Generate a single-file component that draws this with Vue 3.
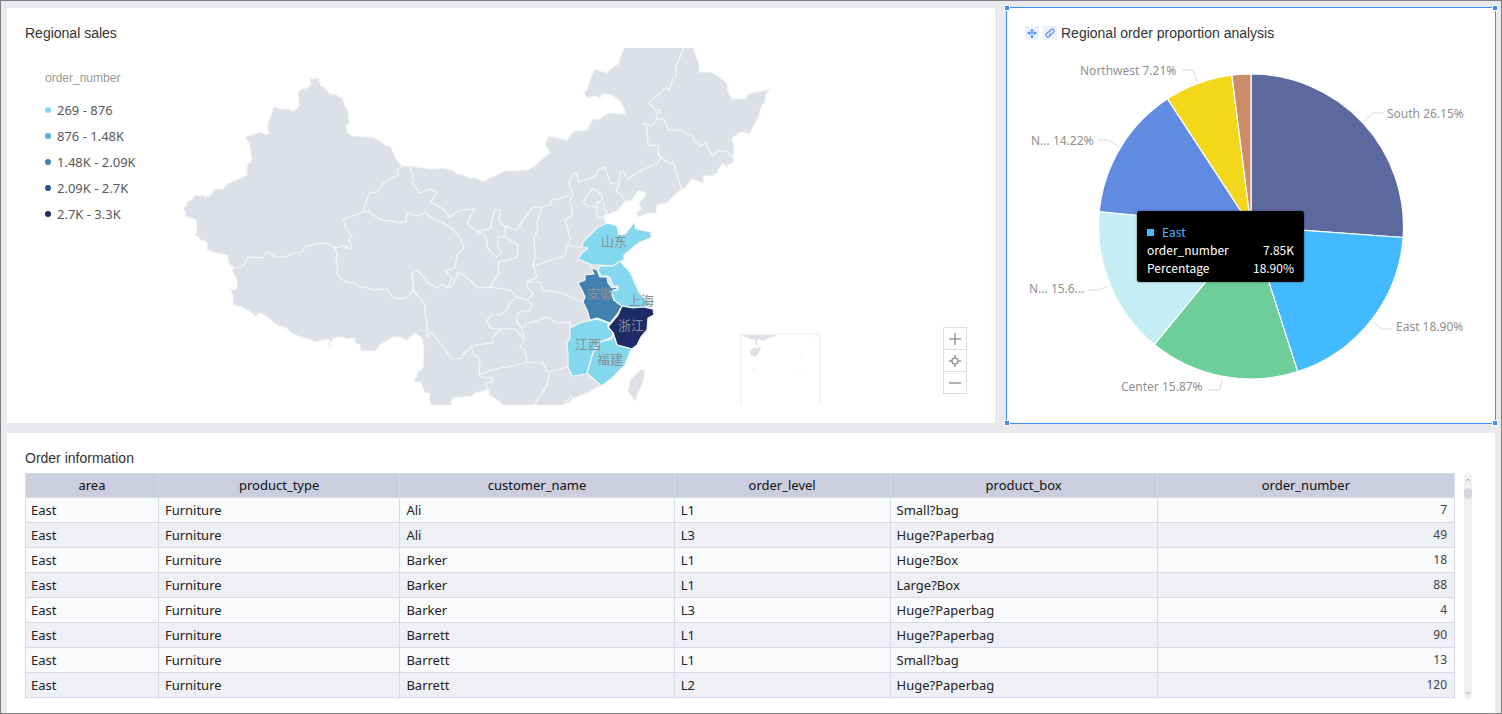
<script setup>
import { computed, ref } from 'vue'

// --- Map data ---
const legend = [
  { label: '269 - 876', color: '#84d8ee' },
  { label: '876 - 1.48K', color: '#5ba9d4' },
  { label: '1.48K - 2.09K', color: '#4180b1' },
  { label: '2.09K - 2.7K', color: '#2a5694' },
  { label: '2.7K - 3.3K', color: '#1d2b66' },
]

const mainland =
  'M183 209L186 206 187 202 192 199 196 195 200 196 203 194 204 197 210 196 215 189 223 189 227 184 247 175 247 166 250 162 252 160 249 143 245 137 261 132 264 134 269 134 267 127 274 106 280 109 289 109 292 111 297 109 299 106 298 93 301 89 307 88 311 84 310 79 319 78 319 82 321 83 320 85 325 88 330 94 337 95 343 99 345 107 349 112 348 117 350 122 346 126 348 133 353 136 373 137 380 141 385 145 391 147 395 158 402 166 410 166 430 169 443 168 452 170 456 173 463 175 469 178 477 178 483 182 492 177 505 171 527 170 535 166 542 159 550 153 545 144 549 136 567 140 574 131 587 130 593 119 600 119 603 116 610 113 625 114 624 108 620 101 612 95 603 94 600 98 595 96 587 98 584 93 587 90 589 82 595 69 606 73 619 63 620 58 624 48 624 46 692 46 693 48 696 55 699 64 699 72 710 72 718 76 727 83 728 92 732 99 746 99 748 94 758 92 770 89 766 95 765 101 761 108 758 118 754 125 750 134 741 132 732 138 734 148 733 163 727 165 727 168 723 163 719 168 717 173 712 176 703 176 704 183 692 179 685 188 680 190 667 203 657 205 656 213 648 213 639 217 636 213 641 209 639 203 646 195 643 191 638 191 632 200 625 202 617 211 609 214 605 215 605 222 607 223 617 226 619 235 625 234 630 228 634 222 636 229 651 232 651 238 640 242 630 250 624 255 624 260 620 261 630 272 635 283 639 292 646 300 652 305 647 307 653 309 654 315 648 318 647 330 637 345 632 349 630 352 625 365 613 377 602 386 595 388 590 392 577 397 573 398 570 402 567 403 560 407 505 407 500 402 489 395 488 389 480 392 475 393 472 396 463 397 452 398 451 407 433 407 429 400 430 393 425 393 420 382 414 382 418 372 423 368 423 360 424 350 422 338 415 333 410 337 407 341 400 337 393 337 380 345 376 351 361 351 360 345 355 343 355 338 347 339 342 337 333 338 331 342 330 347 329 339 322 340 315 342 309 339 303 338 293 334 285 327 279 326 273 322 265 315 259 313 256 317 252 313 242 307 233 305 233 295 230 289 235 290 237 288 237 280 232 270 234 268 229 264 227 255 217 253 207 250 207 242 200 240 198 236 193 236 197 233 196 220 188 217 185 217 186 212Z'

const taiwan = 'M641 369L645 371 643 383 637 395 635 402 633 398 628 392 630 380Z'

// Shared borders between the provinces that carry no value
const borders = [
  'M234 268L242 267 248 257 262 258 268 252 275 257 285 257 293 253 302 252 305 247 315 244 327 243 335 248 344 246 350 249 351 244 348 240 352 236 345 227 345 223 342 220 363 212 369 193 377 192 383 183 391 179 398 175 397 170 402 166',
  'M363 212L368 211 373 215 382 220 391 221 400 223 406 221 407 212 416 216 425 213 435 220 442 222 450 227 460 237 464 248 457 255 455 268 445 271 452 278 447 288',
  'M335 248L337 253 336 260 338 267 337 273 341 279 347 282 353 283 359 286 367 288 373 290 387 289 392 297 400 299 408 297 413 290',
  'M413 290L413 280 412 273 417 271 425 278 428 283 437 288 443 284 447 288 453 285 458 272 463 275 468 278 478 288 490 287 510 290 517 297 510 302 507 310 500 315 492 315 487 320 490 328 500 329 515 329 523 338',
  'M413 290L420 298 425 305 425 313 427 323 427 338 431 332 434 336 440 343 452 359 462 358 464 353 472 347 477 345 493 343 493 337 500 329',
  'M472 347L473 354 478 357 480 365 479 375 483 378 492 377 493 382 485 383 488 389',
  'M479 375L492 370 500 368 508 367 517 365 527 362 543 363 547 372 558 370 568 367',
  'M549 373L548 382 543 392 537 400 533 407',
  'M517 297L527 300 532 304 530 310 517 313 517 322 522 328 524 340 520 347 525 350 527 362',
  'M524 328L525 324 532 322 547 317 557 323 570 322 570 328',
  'M410 167L414 180 412 183 420 193 430 189 437 192 431 202 443 209 450 217 458 211 475 209 468 220 468 225 478 232 491 228 492 220 495 210 500 210 499 222 505 226 512 229 518 229 522 222 532 208 542 207 550 205 552 200 558 199 570 195',
  'M478 232L484 234 487 240 487 247 492 253 497 257 501 252 498 246 498 237 505 237 518 245 517 257 508 260 498 262 499 273 490 287',
  'M505 226L505 237',
  'M542 207L537 223 538 230 534 237 535 257 533 266 537 277 527 282 527 287 533 294 527 300',
  'M527 282L540 282 543 290 563 293 577 300 584 302',
  'M533 266L545 262 557 258 565 255 567 245 570 240 568 230 565 220 573 215 570 200 573 196 569 182 574 173 577 174 579 182 587 179 597 175 597 171 605 167 610 183 619 184 620 172 623 172 628 179 642 170 658 163 661 157 658 155 659 145 648 146 647 127 643 123 652 126 657 119 656 113 660 113 660 110 656 110 649 103 667 87 669 92 673 78 676 77 676 67 683 50 683 46',
  'M567 245L582 248',
  'M657 119L664 119 668 130 680 130 685 133 693 135 694 141 699 143 699 147 706 143 712 156 718 151 726 151 733 157',
  'M661 157L670 164 673 162 678 177 681 189',
  'M619 184L616 191 622 195 625 202',
  'M583 203L588 195 593 188 602 195 602 200 597 202 597 207 587 206Z',
  'M597 202L604 203 604 209 607 212 603 218 596 215 598 207',
  'M575 398L571 396 568 400 564 402',
]

const provinces = [
  {
    name: '山东', x: 614, y: 246, color: '#84d8ee',
    path: 'M607 223L617 226 619 235 625 234 630 228 634 222 636 229 651 232 651 238 640 242 630 250 624 255 624 260 613 266 600 265 592 265 585 262 578 259 582 253 588 248 582 247 583 242 592 233 597 228Z',
  },
  {
    name: '安徽', x: 600, y: 298, color: '#4180b1',
    path: 'M591 267L597 270 600 277 607 277 608 283 612 288 617 287 617 289 611 291 614 300 622 306 618 313 610 323 597 318 590 320 587 310 583 302 585 297 582 290 578 283 585 280 585 275 594 274Z',
  },
  {
    name: '上海', x: 641, y: 305, color: '#84d8ee',
    path: 'M620 261L630 272 635 283 639 292 646 300 652 305 643 308 633 308 622 306 614 300 611 291 618 290 618 286 613 286 610 278 607 276 601 276 598 270 600 266 613 266Z',
  },
  {
    name: '浙江', x: 631, y: 330, color: '#1d2b66',
    path: 'M622 306L633 308 643 307 653 309 654 315 648 318 647 330 641 337 637 345 632 349 617 345 613 333 608 327 618 315Z',
  },
  {
    name: '江西', x: 588, y: 349, color: '#84d8ee',
    path: 'M570 328L580 323 597 319 608 323 608 327 613 333 612 337 600 342 593 353 587 374 572 376 568 367 568 355 567 343 570 338Z',
  },
  {
    name: '福建', x: 610, y: 364, color: '#84d8ee',
    path: 'M613 333L617 345 632 349 630 352 625 365 613 377 602 386 597 382 587 373 593 353 600 342 612 339Z',
  },
]

// --- Pie data ---
const pie = { cx: 1251, cy: 226.5, r: 152.5 }
const regions = [
  { value: 26.15, color: '#5c699f', label: 'South 26.15%', x: 1387, y: 118, line: '1364,121 1373,113 1384,113' },
  { value: 18.9, color: '#43baff', label: 'East 18.90%', x: 1396, y: 331, line: '1373,322 1382,329 1392,329' },
  { value: 15.87, color: '#6dce99', label: 'Center 15.87%', x: 1121, y: 391, line: '1222,379 1220,390 1208,390' },
  { value: 15.65, color: '#c4eef4', label: 'N... 15.6...', x: 1029, y: 293, line: '1108,286 1098,290 1087,290' },
  { value: 14.22, color: '#608be1', label: 'N... 14.22%', x: 1031, y: 145, line: '1119,147 1109,140 1098,140' },
  { value: 7.21, color: '#f3d71a', label: 'Northwest 7.21%', x: 1080, y: 75, line: '1197,82 1193,70 1182,70' },
  { value: 2, color: '#cd8c69' },
]

const slices = computed(() => {
  let start = 0
  return regions.map((region) => {
    const end = start + region.value / 100
    const from = pointAt(start)
    const to = pointAt(end)
    start = end
    return {
      ...region,
      path: `M${pie.cx} ${pie.cy}L${from}A${pie.r} ${pie.r} 0 0 1 ${to}Z`,
    }
  })
})

function pointAt(share) {
  const angle = share * 2 * Math.PI
  const x = pie.cx + pie.r * Math.sin(angle)
  const y = pie.cy - pie.r * Math.cos(angle)
  return `${x.toFixed(2)} ${y.toFixed(2)}`
}

// --- Table data ---
const columns = ['area', 'product_type', 'customer_name', 'order_level', 'product_box', 'order_number']
const rows = ref([
  ['East', 'Furniture', 'Ali', 'L1', 'Small?bag', 7],
  ['East', 'Furniture', 'Ali', 'L3', 'Huge?Paperbag', 49],
  ['East', 'Furniture', 'Barker', 'L1', 'Huge?Box', 18],
  ['East', 'Furniture', 'Barker', 'L1', 'Large?Box', 88],
  ['East', 'Furniture', 'Barker', 'L3', 'Huge?Paperbag', 4],
  ['East', 'Furniture', 'Barrett', 'L1', 'Huge?Paperbag', 90],
  ['East', 'Furniture', 'Barrett', 'L1', 'Small?bag', 13],
  ['East', 'Furniture', 'Barrett', 'L2', 'Huge?Paperbag', 120],
])
</script>

<template>
  <main class="dashboard">
    <section class="panel">
      <h2 class="panel-title">Regional sales</h2>
      <div class="map-body">
        <div class="legend">
          <h3>order_number</h3>
          <ul>
            <li v-for="item in legend" :key="item.label">
              <span class="dot" :style="{ background: item.color }"></span>
              {{ item.label }}
            </li>
          </ul>
        </div>
        <svg class="map" viewBox="175 48 760 357" role="img" aria-label="Regional sales map">
          <path class="land" :d="mainland" />
          <path class="land" :d="taiwan" />
          <path v-for="(d, i) in borders" :key="i" class="border" :d="d" />
          <path v-for="p in provinces" :key="p.name" class="province" :d="p.path" :fill="p.color" />
          <text v-for="p in provinces" :key="p.name" class="map-label" :x="p.x" :y="p.y">{{ p.name }}</text>
          <path class="inset-frame" d="M741 410V334H820V410" />
          <path class="inset-land" d="M742 335H777L773 337 768 338 763 341 758 339 757 342 755 340 747 338Z" />
          <path class="inset-land" d="M750 352L753 348 757 348 761 347 759 353 755 357 751 355Z" />
          <path class="inset-coast" d="M757 339L756 343 758 345" />
          <path class="inset-dash" d="M813 338L809 343M804 353L801 358M800 369V374M798 390L797 395M753 368L755 373M757 389V394M807 335L808 338" />
        </svg>
        <div class="zoom">
          <button type="button" aria-label="Zoom in">
            <svg viewBox="0 0 12 12"><path d="M0 6H12M6 0V12" /></svg>
          </button>
          <button type="button" aria-label="Reset view">
            <svg viewBox="0 0 12 12">
              <circle cx="6" cy="6" r="3" />
              <path d="M0 6H3M9 6H12M6 0V3M6 9V12" />
            </svg>
          </button>
          <button type="button" aria-label="Zoom out">
            <svg viewBox="0 0 12 12"><path d="M0 6H12" /></svg>
          </button>
        </div>
      </div>
    </section>

    <section class="panel selected">
      <span class="handle top left"></span>
      <span class="handle top right"></span>
      <span class="handle bottom left"></span>
      <span class="handle bottom right"></span>
      <div class="title-row">
        <button type="button" class="tag" aria-label="Drill down">
          <svg viewBox="0 0 14 14">
            <path class="line" d="M4 7H10M7 4V8" />
            <path class="solid" d="M2 7L5 5V9ZM12 7L9 5V9ZM5 5L7 3 9 5ZM6 9H8V12H6Z" />
          </svg>
        </button>
        <button type="button" class="tag" aria-label="Linked charts">
          <svg viewBox="0 0 14 14">
            <path class="link" d="M6.2 5.2L7.8 3.6A1.9 1.9 0 0 1 10.5 6.3L8.9 7.9A1.9 1.9 0 0 1 6.4 8M7.8 8.8L6.2 10.4A1.9 1.9 0 0 1 3.5 7.7L5.1 6.1A1.9 1.9 0 0 1 7.6 6" />
          </svg>
        </button>
        <h2 class="panel-title">Regional order proportion analysis</h2>
      </div>
      <div class="pie-body">
        <svg class="pie" viewBox="1025 48 452 357" role="img" aria-label="Order share by region">
          <path v-for="slice in slices" :key="slice.color" class="slice" :d="slice.path" :fill="slice.color" />
          <template v-for="slice in slices" :key="slice.color">
            <g v-if="slice.label">
              <polyline class="leader" :points="slice.line" />
              <text class="pie-label" :x="slice.x" :y="slice.y">{{ slice.label }}</text>
            </g>
          </template>
        </svg>
        <div class="tooltip">
          <div class="tooltip-name"><span class="swatch"></span>East</div>
          <div class="tooltip-row"><span>order_number</span><span>7.85K</span></div>
          <div class="tooltip-row"><span>Percentage</span><span>18.90%</span></div>
        </div>
      </div>
    </section>

    <section class="panel orders">
      <h2 class="panel-title">Order information</h2>
      <div class="table-body">
        <div class="table-scroll">
          <table>
            <colgroup>
              <col v-for="name in columns" :key="name" :class="`col-${name}`" />
            </colgroup>
            <thead>
              <tr>
                <th v-for="name in columns" :key="name" scope="col">{{ name }}</th>
              </tr>
            </thead>
            <tbody>
              <tr v-for="(row, i) in rows" :key="i">
                <td v-for="(cell, j) in row" :key="j" :class="{ number: j === 5 }">{{ cell }}</td>
              </tr>
              <tr class="next-row">
                <td v-for="name in columns" :key="name"></td>
              </tr>
            </tbody>
          </table>
        </div>
        <div class="scrollbar">
          <svg viewBox="0 0 8 8"><path d="M2 5L4 3 6 5" /></svg>
          <span class="thumb"></span>
          <svg class="down" viewBox="0 0 8 8"><path d="M2 3L4 5 6 3" /></svg>
        </div>
      </div>
    </section>
  </main>
</template>

<style>
body {
  margin: 0;
}
</style>

<style scoped>
.dashboard {
  box-sizing: border-box;
  min-height: 100vh;
  padding: 7px 6px 0;
  border: 1px solid #7f7f7f;
  display: grid;
  grid-template-columns: 988fr 488fr;
  grid-template-rows: auto 1fr;
  gap: 10px 12px;
  background: #eae9ee;
  font-family: "Noto Sans", "Noto Sans CJK SC", sans-serif;
  color: #333;
}

.panel {
  min-width: 0;
  padding: 14px 18px 18px;
  background: #fff;
}

.panel-title {
  margin: 0;
  font: 400 14px/22px "Liberation Sans", Arial, sans-serif;
  color: #333;
}

/* Map */
.map-body {
  display: flex;
  margin-top: 4px;
  padding: 0 10px 0 20px;
}

.legend {
  width: 130px;
  padding-top: 20px;
}

.legend h3 {
  margin: 0 0 9px;
  font: 400 12px/20px "Liberation Sans", Arial, sans-serif;
  color: #999;
}

.legend ul {
  margin: 0;
  padding: 0;
  list-style: none;
}

.legend li {
  display: flex;
  align-items: center;
  gap: 6px;
  font-size: 13px;
  line-height: 26px;
  color: #595959;
}

.dot {
  width: 6px;
  height: 6px;
  border-radius: 50%;
}

.map {
  flex: 1;
  min-width: 0;
  height: 357px;
}

.land {
  fill: #dee0e8;
  stroke: #f5f5f5;
  stroke-width: 1;
  stroke-linejoin: round;
}

.border {
  fill: none;
  stroke: #f7f7f7;
  stroke-width: 1.2;
  stroke-linejoin: round;
}

.province {
  stroke: #f7f7f7;
  stroke-width: 1.2;
  stroke-linejoin: round;
}

.map-label {
  font: 13px "Noto Sans CJK SC", sans-serif;
  text-anchor: middle;
  fill: #8a8f92;
}

.inset-frame {
  fill: none;
  stroke: #f4f4f4;
  stroke-width: 1.5;
}

.inset-land {
  fill: #dee0e8;
}

.inset-coast {
  fill: none;
  stroke: #dee0e8;
  stroke-width: 1.5;
}

.inset-dash {
  fill: none;
  stroke: #efefef;
}

.zoom {
  align-self: flex-end;
  display: flex;
  flex-direction: column;
  margin: 0 0 11px 8px;
}

.zoom button {
  display: flex;
  align-items: center;
  justify-content: center;
  box-sizing: border-box;
  width: 24px;
  height: 23px;
  padding: 0;
  border: 1px solid #ddd;
  background: #fff;
}

.zoom button + button {
  margin-top: -1px;
}

.zoom svg {
  width: 12px;
  height: 12px;
  fill: none;
  stroke: #999;
  stroke-width: 1.5;
}

/* Pie */
.selected {
  position: relative;
  outline: 1px solid #448af8;
}

.handle {
  position: absolute;
  width: 4px;
  height: 4px;
  border: 1px solid #fff;
  background: #448af8;
}

.top {
  top: -3px;
}

.bottom {
  bottom: -3px;
}

.left {
  left: -3px;
}

.right {
  right: -3px;
}

.title-row {
  display: flex;
  align-items: center;
  gap: 4px;
}

.tag {
  width: 14px;
  height: 14px;
  padding: 0;
  border: 0;
  background: #ebf2ff;
}

.tag svg {
  display: block;
}

.line,
.link {
  fill: none;
  stroke: #4c8bf5;
  stroke-width: 1.2;
}

.solid {
  fill: #4c8bf5;
}

.pie-body {
  position: relative;
  margin-top: 4px;
}

.pie {
  display: block;
  width: 100%;
  height: 357px;
}

.slice {
  stroke: #fff;
  stroke-width: 1.2;
}

.leader {
  fill: none;
  stroke: #d9d9d9;
}

.pie-label {
  font-size: 12px;
  fill: #8f8f8f;
}

.tooltip {
  position: absolute;
  top: 163px;
  left: calc(50% - 114px);
  box-sizing: border-box;
  width: 167px;
  padding: 12px 10px 5px;
  border-radius: 3px;
  background: #000;
  box-shadow: 0 0 2px rgba(0, 0, 0, 0.6);
  font-family: "Noto Sans CJK SC", sans-serif;
  font-size: 12px;
  line-height: 18px;
  color: #fff;
}

.tooltip-name {
  display: flex;
  align-items: center;
  gap: 8px;
  color: #43baff;
}

.swatch {
  width: 7px;
  height: 7px;
  background: #43baff;
}

.tooltip-row {
  display: flex;
  justify-content: space-between;
}

/* Table */
.orders {
  grid-column: 1 / -1;
  padding-bottom: 14px;
  padding-right: 23px;
}

.table-body {
  display: flex;
  gap: 9px;
  margin-top: 4px;
}

.table-scroll {
  flex: 1;
  height: 226px;
  overflow: hidden;
}

table {
  width: 100%;
  border-collapse: collapse;
  table-layout: fixed;
  font-size: 13px;
  line-height: 24px;
  color: #222;
}

.col-area {
  width: 9.3%;
}

.col-product_type {
  width: 16.9%;
}

.col-customer_name {
  width: 19.2%;
}

.col-order_level {
  width: 15.1%;
}

.col-product_box {
  width: 18.7%;
}

th,
td {
  padding: 0 6px;
  border: 1px solid #d7dae6;
}

td:first-child {
  padding-left: 5px;
}

th {
  background: #cccedf;
  font-weight: 400;
  line-height: 23px;
  color: #111;
}

td {
  background: #f9fafc;
}

tr:nth-child(even) td {
  background: #eff0f5;
}

.number {
  padding-right: 7px;
  font-size: 12px;
  text-align: right;
  color: #444;
}

tr.next-row td {
  height: 24px;
  background: #f9fafc;
}

.scrollbar {
  display: flex;
  flex-direction: column;
  align-items: center;
  box-sizing: border-box;
  width: 8px;
  padding: 3px 0 2px;
  border-radius: 4px;
  background: #f1f1f1;
}

.scrollbar svg {
  width: 8px;
  height: 8px;
  fill: none;
  stroke: #aaa;
}

.thumb {
  width: 8px;
  height: 11px;
  margin-top: 4px;
  border-radius: 4px;
  background: #d5d8e2;
}

.scrollbar .down {
  margin-top: auto;
}
</style>
